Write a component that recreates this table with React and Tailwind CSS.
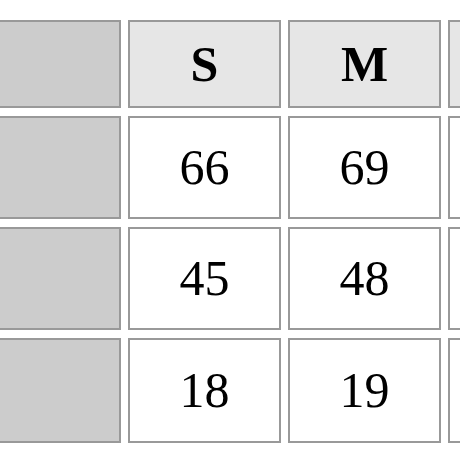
const sizes = ["S", "M"];
const rows = [
  [66, 69],
  [45, 48],
  [18, 19],
];

const cell =
  "flex items-center justify-center border-2 border-[#999999] text-black";

export default function App() {
  return (
    <div className="w-[460px] h-[460px] overflow-hidden bg-white pt-[20px]">
      <div
        className="ml-[-32px] grid grid-cols-[153px_153px_153px_153px] grid-rows-[88px_103px_103px_105px] gap-x-[7px] gap-y-[8px] w-max"
        style={{ fontFamily: '"Liberation Serif", "Times New Roman", serif' }}
      >
        <div className={`${cell} bg-[#cccccc]`} />
        {sizes.map((s) => (
          <div key={s} className={`${cell} bg-[#e6e6e6] text-[50px] font-bold`}>
            {s}
          </div>
        ))}
        <div className={`${cell} bg-[#e6e6e6]`} />
        {rows.map((r, i) => (
          <div key={i} className="contents">
            <div className={`${cell} bg-[#cccccc]`} />
            {r.map((v, j) => (
              <div key={j} className={`${cell} bg-white text-[50px]`}>
                {v}
              </div>
            ))}
            <div className={`${cell} bg-white`} />
          </div>
        ))}
      </div>
    </div>
  );
}
